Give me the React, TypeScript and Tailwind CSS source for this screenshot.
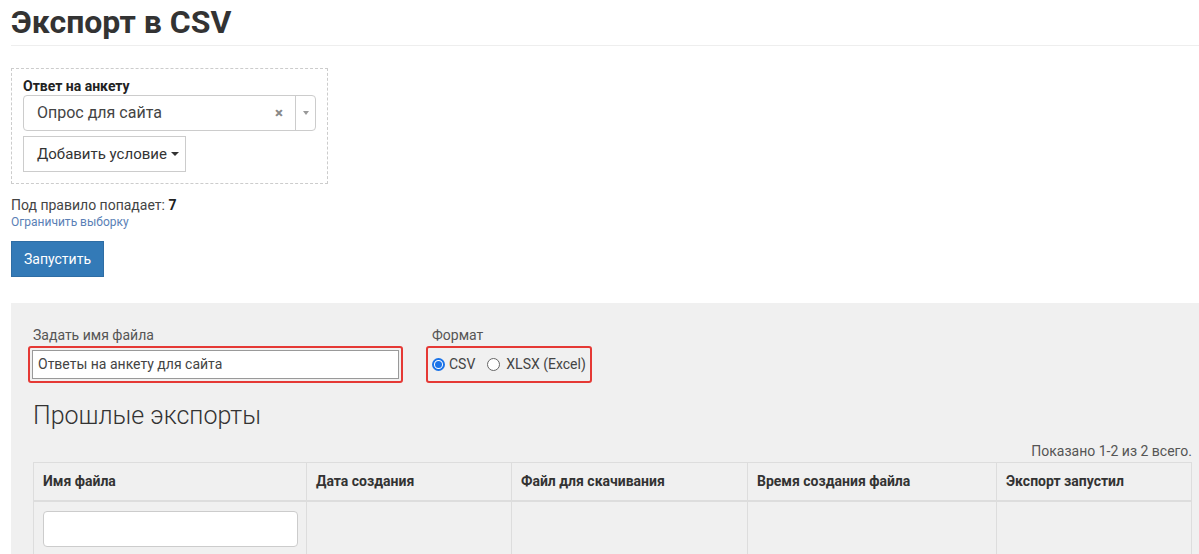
import React from "react";

export default function App() {
  const font = { fontFamily: "Roboto, 'Noto Sans', sans-serif" } as React.CSSProperties;
  return (
    <div className="w-[1199px] h-[554px] overflow-hidden bg-white text-[#333]" style={font}>
      <div className="pl-[11px]">
        <h1 className="text-[32px] font-bold leading-none pt-[6px] pb-[7px] text-[#333]">Экспорт в CSV</h1>
        <div className="h-px bg-[#eee]" />

        <div className="mt-[22px] w-[317px] h-[116px] border border-dashed border-[#ccc] px-[11px] pt-[9px]">
          <div className="text-[14px] font-bold leading-[17px] text-[#222]">Ответ на анкету</div>
          <div className="w-[293px] h-[36px] border border-[#ccc] rounded-[4px] bg-white flex items-center">
            <span className="flex-1 pl-[13px] text-[16px] text-[#444]">Опрос для сайта</span>
            <span className="w-[20px] text-[15px] font-black text-[#888] leading-none">×</span>
            <span className="h-full w-[20px] border-l border-[#ccc] flex items-center justify-center">
              <span className="w-0 h-0 border-l-[3px] border-r-[3px] border-t-[4px] border-l-transparent border-r-transparent border-t-[#999]" />
            </span>
          </div>
          <div className="mt-[5px] w-[163px] h-[36px] border border-[#ccc] bg-white flex items-center pl-[13px] text-[15px] text-[#333]">
            Добавить условие
            <span className="ml-[4px] w-0 h-0 border-l-[4px] border-r-[4px] border-t-[4px] border-l-transparent border-r-transparent border-t-[#333]" />
          </div>
        </div>

        <div className="mt-[12px] text-[14px] leading-[18px] text-[#444]">
          Под правило попадает: <b className="text-[#222]">7</b>
        </div>
        <div className="mt-[1px] text-[12px] leading-[15px] text-[#5a7fb6]">Ограничить выборку</div>

        <button className="mt-[11px] w-[93px] h-[36px] bg-[#337ab7] border border-[#2e6da4] text-white text-[14px] flex items-center justify-center">
          Запустить
        </button>

        <div className="mt-[26px] bg-[#f0f0f0] h-[260px] pl-[22px] pr-[7px] pt-[23px]">
          <div className="flex gap-[23px]">
            <div>
              <div className="text-[14px] leading-[18px] text-[#555] mb-[2px]">Задать имя файла</div>
              <div className="-ml-[5px] w-[375px] h-[37px] border-[2px] border-[#e53935] rounded-[3px] p-[2px]">
                <div className="h-full border border-[#999] bg-white flex items-center pl-[5px] text-[14px] text-[#444]">
                  Ответы на анкету для сайта
                </div>
              </div>
            </div>
            <div>
              <div className="text-[14px] leading-[18px] text-[#555] mb-[2px] pl-[6px]">Формат</div>
              <div className="w-[166px] h-[37px] border-[2px] border-[#e53935] rounded-[3px] flex items-center pl-[4px] text-[14px] text-[#444]">
                <span className="w-[13px] h-[13px] rounded-full border-[2px] border-[#1a73e8] flex items-center justify-center bg-white">
                  <span className="w-[7px] h-[7px] rounded-full bg-[#1a73e8]" />
                </span>
                <span className="ml-[4px]">CSV</span>
                <span className="ml-[12px] w-[13px] h-[13px] rounded-full border border-[#666] bg-white" />
                <span className="ml-[6px]">XLSX (Excel)</span>
              </div>
            </div>
          </div>

          <div className="mt-[18px] text-[25px] font-light leading-[30px] text-[#333]">Прошлые экспорты</div>
          <div className="mt-[11px] text-right text-[14px] leading-[18px] text-[#555]">Показано 1-2 из 2 всего.</div>

          <div className="mt-[2px] border border-[#ddd] border-b-0">
            <div className="grid grid-cols-[272px_205px_236px_249px_1fr] h-[39px] border-b-[2px] border-[#ddd] text-[14px] font-bold text-[#333]">
              <div className="pl-[9px] flex items-center">Имя файла</div>
              <div className="pl-[9px] flex items-center border-l border-[#ddd]">Дата создания</div>
              <div className="pl-[9px] flex items-center border-l border-[#ddd]">Файл для скачивания</div>
              <div className="pl-[9px] flex items-center border-l border-[#ddd]">Время создания файла</div>
              <div className="pl-[9px] flex items-center border-l border-[#ddd]">Экспорт запустил</div>
            </div>
            <div className="grid grid-cols-[272px_205px_236px_249px_1fr] h-[60px]">
              <div className="px-[9px] pt-[9px]">
                <div className="w-[255px] h-[36px] bg-white border border-[#ccc] rounded-[4px]" />
              </div>
              <div className="border-l border-[#ddd]" />
              <div className="border-l border-[#ddd]" />
              <div className="border-l border-[#ddd]" />
              <div className="border-l border-[#ddd]" />
            </div>
          </div>
        </div>
      </div>
    </div>
  );
}
